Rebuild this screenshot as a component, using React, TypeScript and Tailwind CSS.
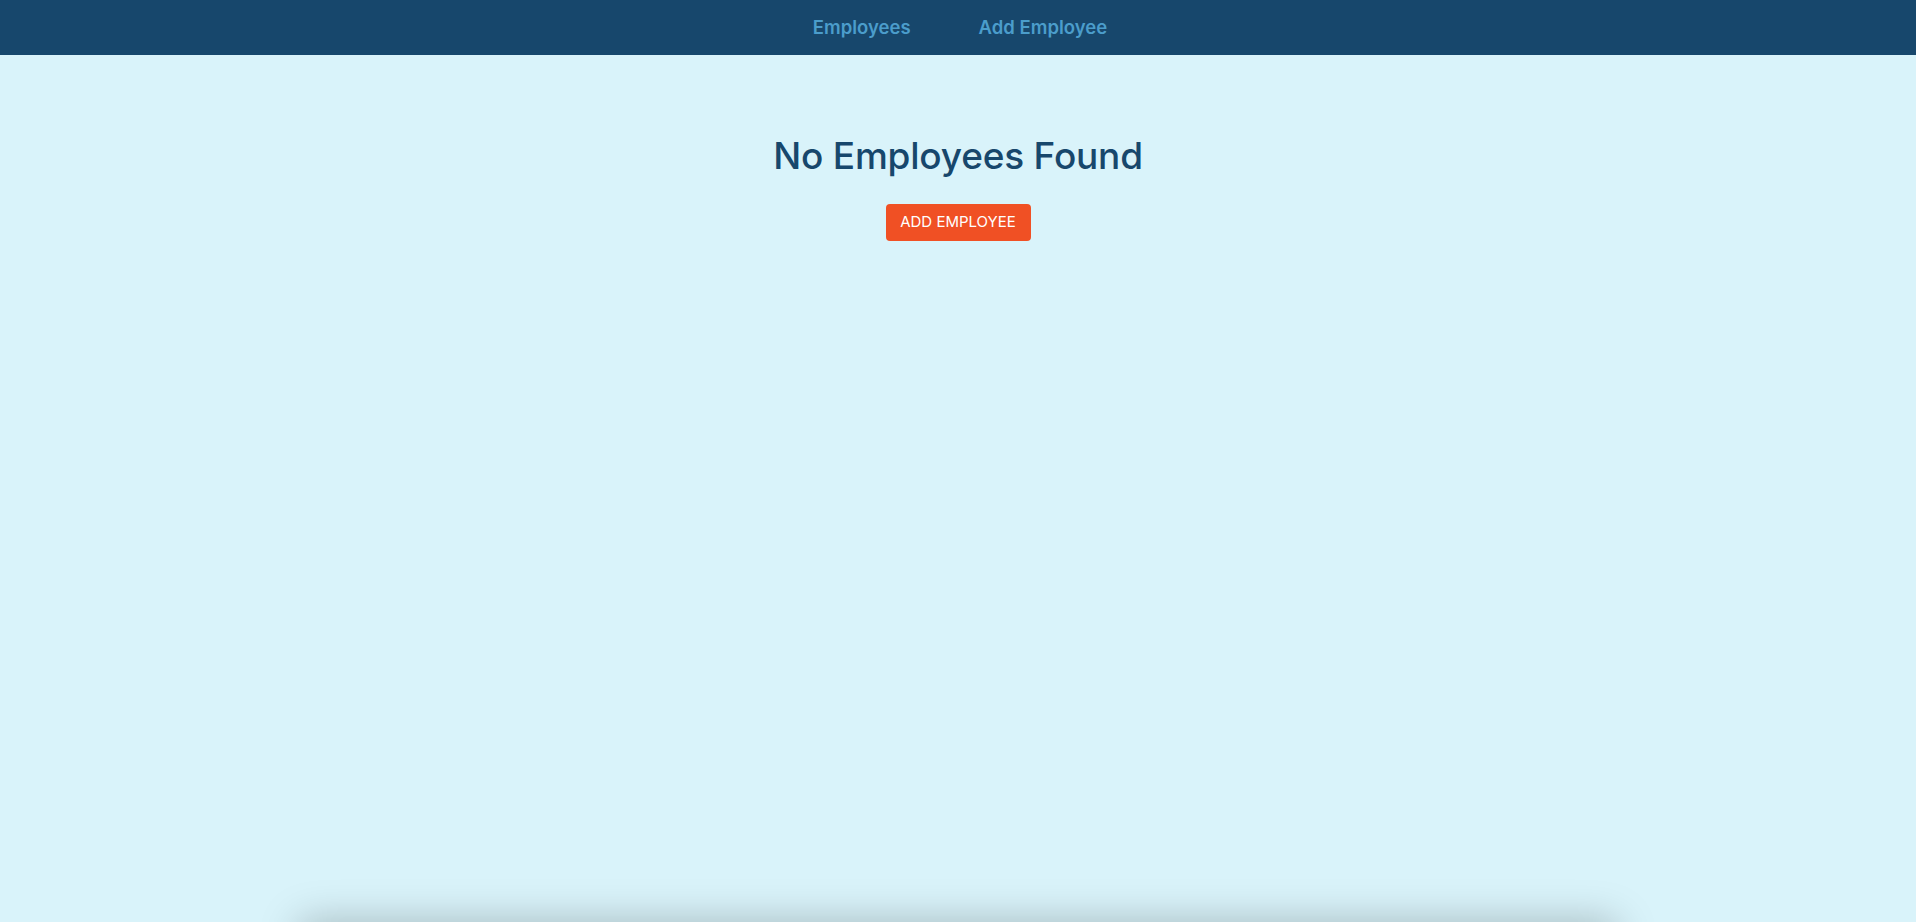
export default function App() {
  return (
    <div className="min-h-screen bg-[#d9f3fa]" style={{ fontFamily: 'Inter, "Noto Sans", sans-serif' }}>
      <header className="h-[55px] bg-[#17476c] flex items-center justify-center gap-[68px] pl-[4px]">
        <a className="text-[18.5px] font-semibold text-[#4b9dcb] cursor-pointer">Employees</a>
        <a className="text-[18.5px] font-semibold text-[#4b9dcb] cursor-pointer">Add Employee</a>
      </header>
      <main className="h-[867px] flex flex-col items-center pt-[78px]">
        <h1 className="text-[37px] font-medium text-[#17476c] leading-[46px] tracking-[-0.2px]">No Employees Found</h1>
        <button className="mt-[25px] h-[37px] w-[145px] rounded-[4px] bg-[#f05024] text-white text-[15px] uppercase">
          Add Employee
        </button>
      </main>
      <div className="mx-auto w-[1316px] h-[40px] bg-[#d9f3fa] shadow-[0_0_40px_rgba(0,0,0,0.25)]"></div>
    </div>
  );
}
